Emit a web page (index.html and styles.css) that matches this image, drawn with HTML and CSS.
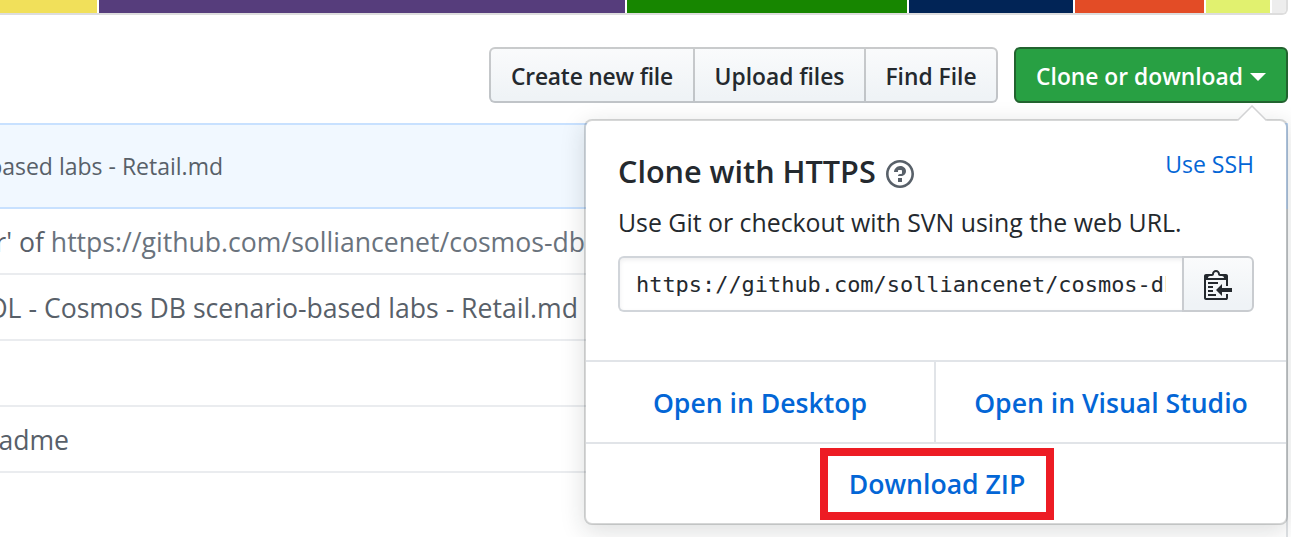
FILE: index.html
```html
<!DOCTYPE html>
<html lang="en">
<head>
<meta charset="utf-8">
<title>Clone or download</title>
<link rel="stylesheet" href="styles.css">
</head>
<body>
<div class="languages">
  <span class="lang js"></span><span class="lang css"></span><span class="lang csharp"></span><span class="lang powershell"></span><span class="lang html"></span><span class="lang batch"></span><span class="lang other"></span>
</div>
<div class="toolbar">
  <div class="group">
    <button class="btn create"><span>Create new file</span></button>
    <button class="btn upload"><span>Upload files</span></button>
    <button class="btn find"><span>Find File</span></button>
  </div>
  <div class="clone">
    <button class="btn primary"><span>Clone or download</span><i class="caret"></i></button>
    <div class="dropdown">
      <svg class="pointer" viewBox="0 0 32 16" width="32" height="16"><path class="pointer-fill" d="M1 16 16 1l15 15z"/><path class="pointer-line" d="M1.5 15.5 16 1l14.500 14.500"/></svg>
      <div class="panel">
        <div class="head">
          <h4><span>Clone with HTTPS</span><svg class="help" viewBox="0 0 14 16" width="28" height="32"><path d="M6 10h2v2H6v-2zm4-3.500C10 8.640 8 9 8 9H6c0-.55.45-1 1-1h.5c.28 0 .5-.22.5-.5v-1c0-.28-.22-.5-.5-.5h-1c-.28 0-.5.22-.5.5V7H4c0-1.500 1.500-3 3-3s3 1 3 2.500zM7 2.300c3.140 0 5.700 2.560 5.700 5.700s-2.560 5.700-5.700 5.700A5.710 5.710 0 0 1 1.300 8c0-3.140 2.560-5.700 5.700-5.700zM7 1C3.140 1 0 4.140 0 8s3.140 7 7 7 7-3.140 7-7-3.140-7-7-7z"/></svg></h4>
          <a class="ssh">Use SSH</a>
        </div>
        <p class="hint">Use Git or checkout with SVN using the web URL.</p>
        <div class="field">
          <div class="url"><span>https://github.com/solliancenet/cosmos-db</span></div>
          <button class="copy"><svg viewBox="0 0 14 16" width="28" height="32"><path d="M2 13h4v1H2v-1zm5-6H2v1h5V7zm2 3V8l-3 3 3 3v-2h5v-2H9zM4.500 9H2v1h2.500V9zM2 12h2.500v-1H2v1zm9 1h1v2c-.02.28-.11.52-.3.7-.19.18-.42.28-.7.3H1c-.55 0-1-.45-1-1V4c0-.55.45-1 1-1h3c0-1.110.89-2 2-2 1.110 0 2 .89 2 2h3c.55 0 1 .45 1 1v5h-1V6H1v9h10v-2zM2 5h8c0-.55-.45-1-1-1H8c-.55 0-1-.45-1-1s-.45-1-1-1-1 .45-1 1-.45 1-1 1H3c-.55 0-1 .45-1 1z"/></svg></button>
        </div>
      </div>
      <div class="open">
        <a class="desktop">Open in Desktop</a>
        <a class="studio">Open in Visual Studio</a>
      </div>
      <div class="zip"><a>Download ZIP</a></div>
    </div>
  </div>
</div>
<div class="commit"><span>based labs - Retail.md</span></div>
<div class="files">
  <div class="row r1"><span>r' of <a>https://github.com/solliancenet/cosmos-db</a></span></div>
  <div class="row r2"><span>OL - Cosmos DB scenario-based labs - Retail.md</span></div>
  <div class="row"></div>
  <div class="row r4"><span>adme</span></div>
</div>
</body>
</html>
```

FILE: styles.css
```css
* { box-sizing: border-box; }
body {
  margin: 0;
  width: 1291px;
  height: 537px;
  overflow: hidden;
  background: #fff;
  color: #24292e;
  font-family: "Open Sans", "Noto Sans", sans-serif;
  font-size: 26.600px;
}
button { font: inherit; margin: 0; padding: 0; }
a { color: #0366d6; text-decoration: none; }
span, a { white-space: nowrap; }

.languages {
  display: flex;
  gap: 2px;
  width: 1288px;
  height: 15px;
  border: solid #ddd;
  border-width: 0 2px 2px 0;
  border-bottom-right-radius: 6px;
  overflow: hidden;
}
.lang { flex: none; height: 13px; }
.js { width: 97px; background: #f1e05a; }
.css { width: 526px; background: #563d7c; }
.csharp { width: 280px; background: #178600; }
.powershell { width: 164px; background: #012456; }
.html { width: 129px; background: #e34c26; }
.batch { width: 64px; background: #e1f16f; }
.other { width: 14px; background: #ededed; }

.toolbar {
  display: flex;
  justify-content: flex-end;
  gap: 16px;
  width: 1288px;
  padding-top: 32px;
  height: 108px;
}
.group { display: flex; }
.btn {
  display: flex;
  align-items: center;
  justify-content: center;
  height: 56px;
  padding-top: 2px;
  border: 2px solid #c8cbcf;
  border-color: rgba(27, 31, 35, .22);
  background: linear-gradient(-180deg, #fafbfc, #eff3f6 90%) border-box;
  color: #24292e;
  font-size: 22.800px;
  font-weight: 600;
}
.create { width: 206px; border-radius: 6px 0 0 6px; letter-spacing: -.2px; }
.upload { width: 171px; border-left: 0; }
.find { width: 132px; border-left: 0; border-radius: 0 6px 6px 0; }
.clone { position: relative; }
.primary {
  width: 274px;
  gap: 7px;
  border-color: #22632f;
  border-radius: 6px;
  background: #28a043;
  color: #fff;
}
.caret {
  border: 8px solid transparent;
  border-top-color: #fff;
  border-bottom: 0;
  margin-top: 2px;
}

.dropdown {
  position: absolute;
  z-index: 2;
  right: 0;
  top: 72px;
  width: 704px;
  height: 406px;
  border: 2px solid rgba(27, 31, 35, .18);
  border-radius: 8px;
  background: #fff;
  background-clip: padding-box;
  box-shadow: 0 6px 24px rgba(27, 31, 35, .15);
}
.pointer { position: absolute; right: 18px; top: -16px; }
.pointer-fill { fill: #fff; }
.pointer-line { fill: none; stroke: #d2d3d4; stroke-width: 1.500; }
.panel { height: 239px; padding: 31px 32px 0; }
.head { display: flex; justify-content: space-between; height: 50px; }
h4 { display: flex; align-items: center; gap: 10px; height: 37px; margin: 0; font-size: 30.600px; font-weight: 600; }
.help { fill: #586069; margin-top: 7px; }
.ssh { font-size: 23px; line-height: 24px; }
.hint { margin: 0; height: 54px; font-size: 24.850px; line-height: 40px; white-space: nowrap; }
.field { display: flex; width: 636px; height: 56px; }
.url {
  width: 566px;
  padding: 0 16px;
  border: 2px solid #d1d5da;
  border-right: 0;
  border-radius: 6px 0 0 6px;
  box-shadow: inset 0 2px 4px rgba(27, 31, 35, .075);
}
.url span {
  display: block;
  overflow: hidden;
  width: 530px;
  font: 21.930px/54px "DejaVu Sans Mono", monospace;
}
.copy {
  display: flex;
  align-items: center;
  justify-content: center;
  width: 72px;
  margin-left: -2px;
  border: 2px solid #c9ccd0;
  border-radius: 0 6px 6px 0;
  background: linear-gradient(#fafbfc, #eff3f6 90%);
}
.copy svg { fill: #24292e; }
.open { display: flex; height: 82px; border-top: 2px solid #e1e4e8; font-weight: 600; }
.open a { display: flex; align-items: center; justify-content: center; height: 80px; padding-top: 1px; }
.desktop { width: 350px; border-right: 2px solid #e1e4e8; }
.studio { width: 350px; }
.zip { display: flex; justify-content: center; height: 80px; padding: 4px 0 0 2px; border-top: 2px solid #e1e4e8; font-weight: 600; }
.zip a {
  display: flex;
  align-items: center;
  justify-content: center;
  width: 234px;
  height: 72px;
  border: 8px solid #ed1c24;
}

.commit {
  width: 1288px;
  height: 86px;
  border: 2px solid #c8e1ff;
  border-left: 0;
  background: #f1f8ff;
  color: #586069;
  font-size: 23px;
  line-height: 82px;
}
.commit span { display: flex; justify-content: flex-end; width: 223px; }
.files { width: 1288px; height: 328px; border-right: 2px solid #dfe2e5; color: #586069; }
.row { display: flex; height: 66px; border-bottom: 2px solid #eaecef; line-height: 66px; overflow: hidden; }
.row span { flex: none; display: flex; justify-content: flex-end; white-space: pre; }
.row a { color: #6a737d; }
.r1 span { width: 585px; }
.r2 span { width: 578px; }
.r4 span { width: 69px; }
```
